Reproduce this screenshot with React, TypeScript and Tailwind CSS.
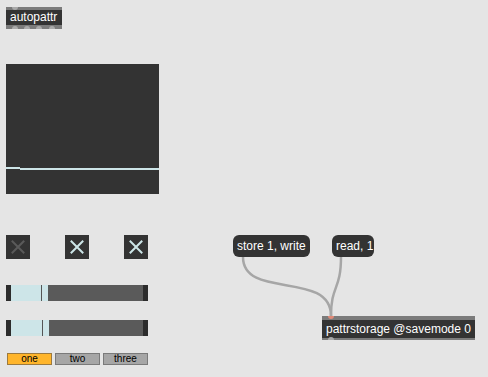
const font = "font-['Liberation_Sans',Arial,sans-serif]";

function Toggle({ on }: { on: boolean }) {
  return (
    <div className="w-6 h-6 bg-[#333333]">
      <svg width="24" height="24" viewBox="0 0 24 24" className="block">
        <path
          d="M6.5 6.5 L17.5 17.5 M17.5 6.5 L6.5 17.5"
          stroke={on ? "#cde6e8" : "#5a5a5a"}
          strokeWidth="2"
          strokeLinecap="square"
        />
      </svg>
    </div>
  );
}

function Slider({ fill, knob }: { fill: string; knob: string }) {
  return (
    <div className="w-[142px] h-4 flex">
      <div className="w-[5px] bg-[#2c2c2c]" />
      <div className={`${fill} bg-[#cde5e8] relative`}>
        <div className={`absolute top-0 bottom-0 w-px bg-[#555555] ${knob}`} />
      </div>
      <div className="flex-1 bg-[#5a5a5a]" />
      <div className="w-[5px] bg-[#2c2c2c]" />
    </div>
  );
}

export default function App() {
  return (
    <main className={`relative w-[488px] h-[377px] bg-[#e5e5e5] overflow-hidden ${font}`}>
      {/* autopattr */}
      <div className="absolute left-[6px] top-[7px] w-[56px] h-[22px] bg-[#7b7b7b] overflow-hidden">
        <div className="absolute left-0 right-0 top-[3px] h-[15px] bg-[#333333] text-white text-[12px] leading-[15px] pl-[4px]">
          autopattr
        </div>
        <div className="absolute left-[6px] top-[-3px] w-[6px] h-[6px] rounded-full bg-[#aaaaaa]" />
        <div className="absolute left-[6px] top-[19px] flex gap-[6px]">
          <div className="w-[6px] h-[6px] rounded-full bg-[#aaaaaa]" />
          <div className="w-[6px] h-[6px] rounded-full bg-[#aaaaaa]" />
          <div className="w-[6px] h-[6px] rounded-full bg-[#aaaaaa]" />
          <div className="w-[6px] h-[6px] rounded-full bg-[#aaaaaa] ml-[1px]" />
        </div>
      </div>

      {/* multislider */}
      <div className="absolute left-[6px] top-[64px] w-[153px] h-[130px] bg-[#333333]">
        <div className="absolute left-0 top-[103px] w-[14px] h-[2px] bg-[#cde5e8]" />
        <div className="absolute left-[14px] right-0 top-[104px] h-[2px] bg-[#cde5e8]" />
      </div>

      {/* toggles */}
      <div className="absolute left-[6px] top-[235px] flex gap-[35px]">
        <Toggle on={false} />
        <Toggle on />
        <Toggle on />
      </div>

      {/* sliders */}
      <div className="absolute left-[6px] top-[285px] flex flex-col gap-[19px]">
        <Slider fill="w-[37px]" knob="left-[30px]" />
        <Slider fill="w-[38px]" knob="left-[31px]" />
      </div>

      {/* tabs */}
      <div className="absolute left-[7px] top-[353px] flex gap-[3px] text-[10px] leading-[10px] text-black">
        <div className="w-[45px] h-[12px] bg-[#ffb52b] border border-[#9c7a3f] flex items-center justify-center">one</div>
        <div className="w-[45px] h-[12px] bg-[#a6a6a6] border border-[#7a7a7a] flex items-center justify-center">two</div>
        <div className="w-[45px] h-[12px] bg-[#a6a6a6] border border-[#7a7a7a] flex items-center justify-center">three</div>
      </div>

      {/* patch cords */}
      <svg className="absolute left-0 top-0" width="488" height="377">
        <path d="M243 257 C 243 300, 331 270, 331 316" fill="none" stroke="#a6a6a6" strokeWidth="2.5" />
        <path d="M341 257 C 341 290, 331 285, 331 316" fill="none" stroke="#a6a6a6" strokeWidth="2.5" />
      </svg>

      {/* message boxes */}
      <div className="absolute left-[233px] top-[235px] w-[77px] h-[22px] rounded-[6px] bg-[#333333] text-white text-[12px] leading-[22px] pl-[4px]">
        store 1, write
      </div>
      <div className="absolute left-[332px] top-[235px] w-[42px] h-[22px] rounded-[6px] bg-[#333333] text-white text-[12px] leading-[22px] pl-[4px]">
        read, 1
      </div>

      {/* pattrstorage */}
      <div className="absolute left-[322px] top-[316px] w-[153px] h-[24px] bg-[#7b7b7b] overflow-hidden">
        <div className="absolute left-0 right-0 top-[4px] h-[18px] bg-[#333333] text-white text-[12px] leading-[18px] pl-[4px]">
          pattrstorage @savemode 0
        </div>
        <div className="absolute left-[6px] top-[-3px] w-[6px] h-[6px] rounded-full bg-[#e08a78]" />
        <div className="absolute left-[6px] top-[21px] w-[6px] h-[6px] rounded-full bg-[#aaaaaa]" />
      </div>
    </main>
  );
}
